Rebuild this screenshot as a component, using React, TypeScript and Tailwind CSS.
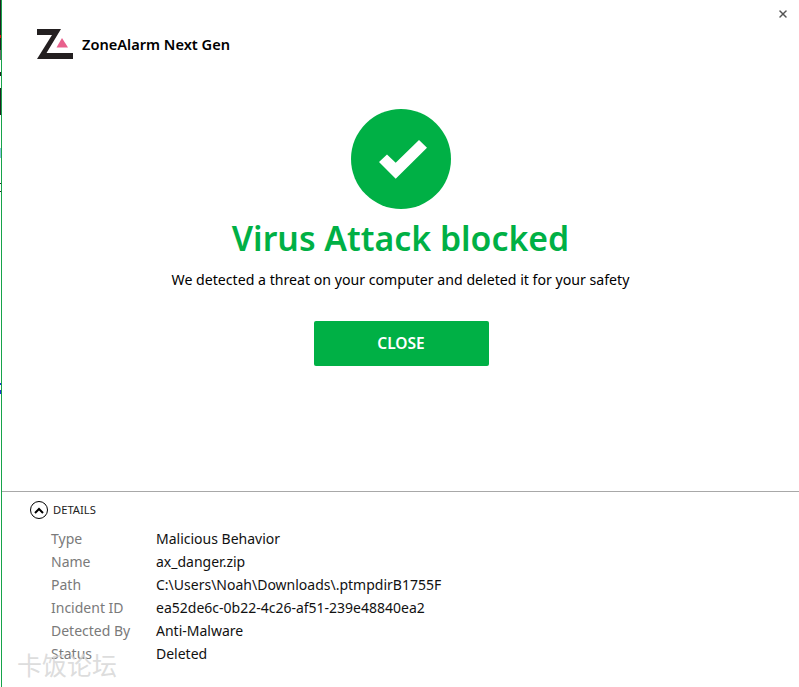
import React from 'react';
import { X } from 'lucide-react';

const details = [
  { label: 'Type', value: 'Malicious Behavior' },
  { label: 'Name', value: 'ax_danger.zip' },
  { label: 'Path', value: 'C:\\Users\\Noah\\Downloads\\.ptmpdirB1755F' },
  { label: 'Incident ID', value: 'ea52de6c-0b22-4c26-af51-239e48840ea2' },
  { label: 'Detected By', value: 'Anti-Malware' },
  { label: 'Status', value: 'Deleted' },
];

// desktop showing through at the window's left edge
const edge = [
  { height: 35, color: '#222222' },
  { height: 3, color: '#e01010' },
  { height: 12, color: '#222222' },
  { height: 10, color: '#666666' },
  { height: 12, color: '#ffffff' },
  { height: 4, color: '#222222' },
  { height: 12, color: '#ffffff' },
  { height: 27, color: '#222222' },
  { height: 33, color: '#ffffff' },
  { height: 10, color: '#8cc4dc' },
  { height: 25, color: '#ffffff' },
  { height: 1, color: '#222222' },
  { height: 7, color: '#ffffff' },
  { height: 1, color: '#222222' },
  { height: 191, color: '#ffffff' },
  { height: 2, color: '#2030d0' },
  { height: 5, color: '#ffffff' },
  { height: 4, color: '#2030d0' },
];

const Logo = () => (
  <svg width="36" height="30" viewBox="0 0 36 30" className="shrink-0">
    <path d="M0 0H24L9.5 24H36V30H0L15 6H0Z" fill="#231f20" />
    <path d="M19.5 18.5L25 9L31 18.5Z" fill="#e8608c" />
  </svg>
);

export default function App() {
  return (
    <div className="relative flex h-[687px] w-[799px] overflow-hidden bg-white font-['Noto_Sans','Open_Sans',sans-serif] text-black">
      <div className="flex w-px shrink-0 flex-col">
        {edge.map((part, index) => (
          <div key={index} style={{ height: part.height, backgroundColor: part.color }} />
        ))}
      </div>
      <div className="min-w-0 flex-1 border-l border-[#16a34a]">
        <div className="flex h-[492px] flex-col border-b border-[#a8a8a8]">
          <div className="flex justify-end pr-[10px] pt-[8px]">
            <X className="h-3 w-3 text-[#555]" strokeWidth={3} />
          </div>
          <div className="mt-[9px] flex items-center gap-[9px] pl-[35px]">
            <Logo />
            <span className="text-[14.6px] font-semibold leading-5">ZoneAlarm Next Gen</span>
          </div>
          <div className="mt-[50px] flex flex-col items-center">
            <div className="flex h-[100px] w-[100px] items-center justify-center rounded-full bg-[#00b045]">
              <svg width="48" height="39" viewBox="0 0 48 39" className="ml-1">
                <path d="M0 22L8 14.5L16.7 22.7L40 0L48 7.7L16.7 38.7Z" fill="#fff" />
              </svg>
            </div>
            <h1 className="mt-[1px] text-[33.8px] font-semibold leading-[56px] text-[#00b045]">Virus Attack blocked</h1>
            <p className="mt-[4px] text-[14.15px] leading-5">We detected a threat on your computer and deleted it for your safety</p>
            <button className="ml-px mt-[31px] h-[45px] w-[175px] rounded-[2px] bg-[#00b045] text-[15.5px] font-semibold text-white">CLOSE</button>
          </div>
        </div>
        <div className="pl-[28px] pt-[8px]">
          <div className="flex h-5 items-center gap-[5px]">
            <span className="flex h-[18px] w-[18px] items-center justify-center rounded-full border border-black">
              <svg width="10" height="7" viewBox="0 0 10 7">
                <path d="M1 6L5 2L9 6" fill="none" stroke="#000" strokeWidth="2" />
              </svg>
            </span>
            <span className="text-[11.2px] text-[#222]">DETAILS</span>
          </div>
          <div className="mt-[7px] pl-[21px]">
            {details.map((row) => (
              <div key={row.label} className="flex h-[23px] items-center text-[14px]">
                <span className="w-[105px] text-[#7a7a7a]">{row.label}</span>
                <span className="text-[#111]">{row.value}</span>
              </div>
            ))}
          </div>
        </div>
      </div>
      <span className="absolute left-[17px] top-[648px] font-['Noto_Sans_CJK_SC',sans-serif] text-[25px] leading-8 text-[#d4d4d4]/80">卡饭论坛</span>
    </div>
  );
}
